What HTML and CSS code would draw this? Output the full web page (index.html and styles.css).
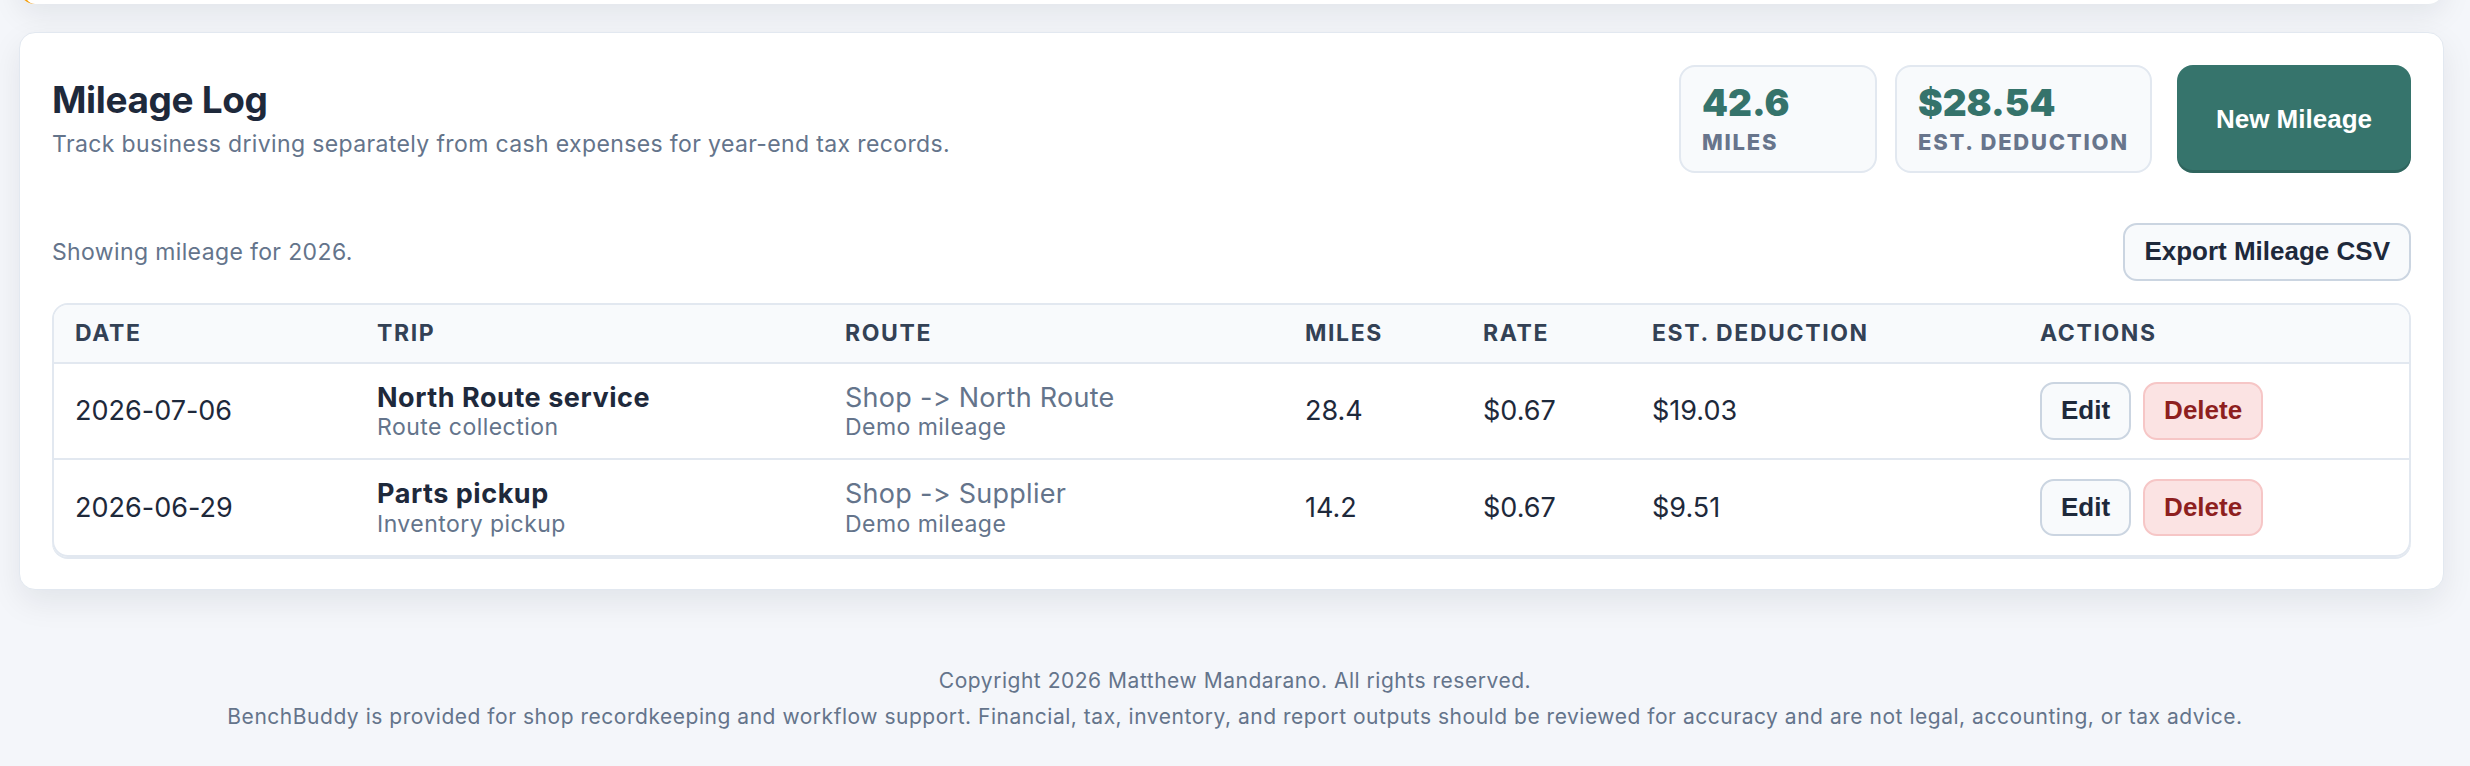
FILE: index.html
```html
<!DOCTYPE html>
<html lang="en">
<head>
<meta charset="utf-8">
<title>Mileage Log</title>
<link rel="stylesheet" href="styles.css">
</head>
<body>
<div class="prev-card"></div>
<section class="card">
  <div class="card-head">
    <div class="titles">
      <h1 class="title">Mileage Log</h1>
      <p class="subtitle">Track business driving separately from cash expenses for year-end tax records.</p>
    </div>
    <div class="head-right">
      <div class="stats">
        <div class="stat">
          <div class="stat-num">42.6</div>
          <div class="stat-label">MILES</div>
        </div>
        <div class="stat">
          <div class="stat-num">$28.54</div>
          <div class="stat-label">EST. DEDUCTION</div>
        </div>
      </div>
      <button class="btn-primary">New Mileage</button>
    </div>
  </div>
  <div class="toolbar">
    <p class="showing">Showing mileage for 2026.</p>
    <button class="btn">Export Mileage CSV</button>
  </div>
  <div class="table-wrap">
    <table class="table">
      <colgroup>
        <col class="c-date"><col class="c-trip"><col class="c-route"><col class="c-miles"><col class="c-rate"><col class="c-ded"><col class="c-act">
      </colgroup>
      <thead>
        <tr><th>DATE</th><th>TRIP</th><th>ROUTE</th><th>MILES</th><th>RATE</th><th>EST. DEDUCTION</th><th>ACTIONS</th></tr>
      </thead>
      <tbody>
        <tr>
          <td>2026-07-06</td>
          <td><div class="main-bold">North Route service</div><div class="sub">Route collection</div></td>
          <td><div class="main-muted">Shop -&gt; North Route</div><div class="sub">Demo mileage</div></td>
          <td>28.4</td>
          <td>$0.67</td>
          <td>$19.03</td>
          <td><div class="actions"><button class="btn btn-sm">Edit</button><button class="btn btn-sm btn-danger">Delete</button></div></td>
        </tr>
        <tr>
          <td>2026-06-29</td>
          <td><div class="main-bold">Parts pickup</div><div class="sub">Inventory pickup</div></td>
          <td><div class="main-muted">Shop -&gt; Supplier</div><div class="sub">Demo mileage</div></td>
          <td>14.2</td>
          <td>$0.67</td>
          <td>$9.51</td>
          <td><div class="actions"><button class="btn btn-sm">Edit</button><button class="btn btn-sm btn-danger">Delete</button></div></td>
        </tr>
      </tbody>
    </table>
  </div>
</section>
<footer class="footer">
  <p>Copyright 2026 Matthew Mandarano. All rights reserved.</p>
  <p>BenchBuddy is provided for shop recordkeeping and workflow support. Financial, tax, inventory, and report outputs should be reviewed for accuracy and are not legal, accounting, or tax advice.</p>
</footer>
</body>
</html>
```

FILE: styles.css
```css
* { box-sizing: border-box; }
html, body { margin: 0; padding: 0; }
body {
  background: #f4f6fa;
  font-family: Inter, "Noto Sans", "Liberation Sans", sans-serif;
  font-feature-settings: "calt" 0;
  font-variant-ligatures: none;
  color: #1e293b;
  overflow: hidden;
}
.prev-card {
  height: 80px;
  margin: -76px 26px 28px 19px;
  background: #fff;
  border-radius: 16px;
  border-left: 4px solid #f59e0b;
  box-shadow: 0 10px 30px rgba(15, 23, 42, 0.08);
}
.card {
  margin: 0 26px 0 19px;
  background: #fff;
  border: 1px solid #e2e8f0;
  border-radius: 16px;
  padding: 32px;
  box-shadow: 0 12px 32px rgba(15, 23, 42, 0.08);
}
.card-head {
  display: flex;
  justify-content: space-between;
  align-items: center;
}
.title {
  margin: 0 0 4px;
  font-size: 37px;
  line-height: 1.26;
  font-weight: 700;
  letter-spacing: -0.01em;
  color: #1e293b;
}
.subtitle {
  margin: 0;
  font-size: 23px;
  line-height: 1.5;
  letter-spacing: 0.016em;
  color: #64748b;
}
.head-right {
  display: flex;
  align-items: stretch;
  gap: 25px;
}
.stats {
  display: flex;
  gap: 18px;
}
.stat {
  min-width: 198px;
  background: #f8fafc;
  border: 2px solid #e2e8f0;
  border-radius: 16px;
  padding: 17px 21px 16px;
}
.stat-num {
  font-size: 37px;
  line-height: 1;
  font-weight: 900;
  color: #35736b;
  margin-bottom: 8px;
}
.stat-label {
  font-size: 22px;
  line-height: 1.2;
  font-weight: 800;
  letter-spacing: 0.08em;
  color: #68758c;
}
button {
  font-family: "Liberation Sans", Arial, sans-serif;
  font-weight: 700;
  font-size: 26px;
  cursor: pointer;
}
.btn-primary {
  background: #36746c;
  color: #fff;
  border: 0;
  border-radius: 16px;
  padding: 0 39px;
  box-shadow: inset 0 -3px 0 rgba(0, 0, 0, 0.12);
}
.toolbar {
  margin-top: 50px;
  display: flex;
  justify-content: space-between;
  align-items: center;
}
.showing {
  margin: 0;
  font-size: 23px;
  letter-spacing: 0.016em;
  color: #64748b;
}
.btn {
  background: #f8fafc;
  color: #1e293b;
  border: 2px solid #cbd5e1;
  border-radius: 14px;
  padding: 12px 19px;
  line-height: 1.15;
}
.table-wrap {
  margin-top: 22px;
  border: 2px solid #e2e8f0;
  border-radius: 16px;
  overflow: hidden;
  box-shadow: 0 2px 0 #e2e8f0;
}
.table {
  width: 100%;
  border-collapse: collapse;
  table-layout: fixed;
}
.c-date { width: 302px; }
.c-trip { width: 468px; }
.c-route { width: 460px; }
.c-miles { width: 178px; }
.c-rate { width: 169px; }
.c-ded { width: 388px; }
.c-act { width: auto; }
.table th {
  background: #f8fafc;
  text-align: left;
  font-size: 23px;
  line-height: 1.25;
  font-weight: 700;
  letter-spacing: 0.07em;
  color: #334155;
  padding: 14px 21px;
  border-bottom: 2px solid #e2e8f0;
}
.table td {
  font-size: 27px;
  line-height: 1.25;
  color: #1e293b;
  padding: 16.5px 21px;
  vertical-align: middle;
  border-bottom: 2px solid #e2e8f0;
}
.table tbody tr:last-child td { border-bottom: 0; }
.main-bold { font-weight: 700; color: #1e293b; letter-spacing: 0.02em; }
.main-muted { color: #64748b; letter-spacing: 0.01em; }
.sub {
  font-size: 23px;
  line-height: 1.2;
  letter-spacing: 0.02em;
  color: #64748b;
}
.actions {
  display: flex;
  gap: 12px;
}
.btn-sm {
  padding: 12px 19px;
}
.btn-danger {
  background: #fbe3e3;
  border-color: #f6c6c6;
  color: #8e1f1f;
}
.footer {
  padding-top: 75px;
  text-align: center;
  font-size: 21px;
  line-height: 1.5;
  letter-spacing: 0.025em;
  color: #64748b;
}
.footer p { margin: 0 0 5px; }
```
